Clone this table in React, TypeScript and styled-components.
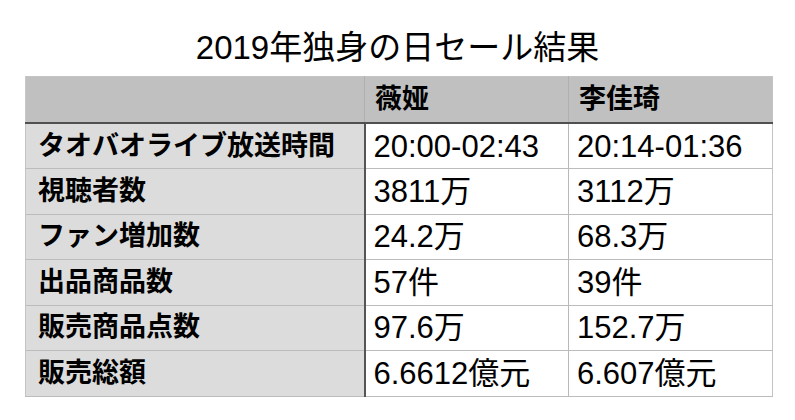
import { FC, ReactElement } from 'react';
import styled, { createGlobalStyle } from 'styled-components';

const GlobalStyle = createGlobalStyle`
  html, body {
    margin: 0;
    padding: 0;
    background: #ffffff;
  }
  body {
    font-family: "Liberation Sans", "Noto Sans CJK JP", sans-serif;
    color: #000000;
  }
`;

// Data for the comparison table
const streamers = ['薇娅', '李佳琦'];

const rows: { label: string; values: string[] }[] = [
  { label: 'タオバオライブ放送時間', values: ['20:00-02:43', '20:14-01:36'] },
  { label: '視聴者数', values: ['3811万', '3112万'] },
  { label: 'ファン増加数', values: ['24.2万', '68.3万'] },
  { label: '出品商品数', values: ['57件', '39件'] },
  { label: '販売商品点数', values: ['97.6万', '152.7万'] },
  { label: '販売総額', values: ['6.6612億元', '6.607億元'] },
];

const App: FC = (): ReactElement => {
  return (
    <Page>
      <GlobalStyle />
      <Title>2019年独身の日セール結果</Title>

      <Table>
        <colgroup>
          <col style={{ width: 339 }} />
          <col style={{ width: 204 }} />
          <col style={{ width: 204 }} />
        </colgroup>
        <thead>
          <tr>
            <HeadCell />
            {streamers.map((name) => (
              <HeadCell key={name}>{name}</HeadCell>
            ))}
          </tr>
        </thead>
        <tbody>
          {rows.map((row) => (
            <BodyRow key={row.label}>
              <LabelCell>{row.label}</LabelCell>
              {row.values.map((v, i) => (
                <ValueCell key={i}>{v}</ValueCell>
              ))}
            </BodyRow>
          ))}
        </tbody>
      </Table>
    </Page>
  );
};

const Page = styled.div`
  width: 795px;
  height: 420px;
  padding-top: 31px;
  box-sizing: border-box;
`;

const Title = styled.h1`
  margin: 0 0 12px 0;
  height: 33px;
  font-size: 33px;
  line-height: 33px;
  font-weight: 400;
  text-align: center;
`;

const Table = styled.table`
  margin-left: 25px;
  width: 747px;
  table-layout: fixed;
  border-collapse: collapse;
  border: 1px solid #c4c4c4;
`;

const HeadCell = styled.th`
  height: 45px;
  padding: 0 10px;
  background: #bfc0bf;
  border-left: 1px solid #b0b0b0;
  border-bottom: 2px solid #505050;
  text-align: left;
  font-size: 27px;
  font-weight: 700;
  line-height: 1;
  &:first-child {
    border-left: 1px solid #c8c8c8;
  }
`;

const BodyRow = styled.tr`
  height: 45.5px;
`;

const LabelCell = styled.td`
  padding: 0 12px;
  background: #dcdcdc;
  border-bottom: 1px solid #bcbcbc;
  border-right: 2px solid #555555;
  font-size: 27px;
  font-weight: 700;
  line-height: 1;
  white-space: nowrap;
`;

const ValueCell = styled.td`
  padding: 0 8px;
  background: #ffffff;
  border-bottom: 1px solid #bcbcbc;
  border-left: 1px solid #b8b8b8;
  font-size: 31px;
  line-height: 1;
  white-space: nowrap;
`;

export default App;
